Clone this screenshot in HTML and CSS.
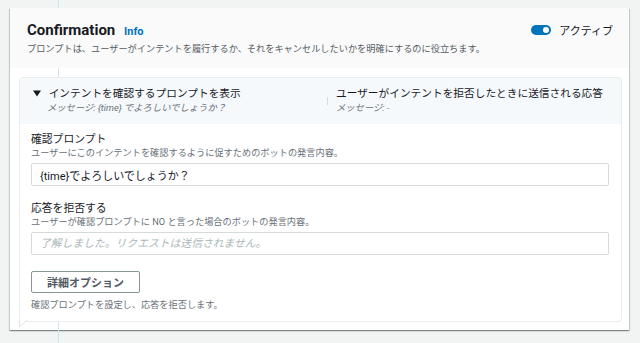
FILE: index.html
```html
<!DOCTYPE html>
<html lang="ja">
<head>
    <meta charset="UTF-8">
    <title>Confirmation</title>
    <link rel="stylesheet" href="styles.css">
</head>
<body>
<div class="page">
    <div class="flow-line"></div>

    <section class="card">
        <header class="card-head">
            <div class="head-text">
                <h2>Confirmation <a class="info">Info</a></h2>
                <p>プロンプトは、ユーザーがインテントを履行するか、それをキャンセルしたいかを明確にするのに役立ちます。</p>
            </div>
            <label class="toggle"><span class="switch"></span>アクティブ</label>
        </header>

        <div class="card-body">
            <div class="panel">
                <div class="panel-head">
                    <div class="col col-left">
                        <div class="col-title">
                            <svg class="caret" width="8" height="7" viewBox="0 0 8 7"><path d="M0 0.5h8L4 6.5z" fill="#16191f"/></svg>
                            インテントを確認するプロンプトを表示
                        </div>
                        <div class="col-sub">メッセージ: {time} でよろしいでしょうか？</div>
                    </div>
                    <div class="col col-right">
                        <div class="col-title">ユーザーがインテントを拒否したときに送信される応答</div>
                        <div class="col-sub">メッセージ: -</div>
                    </div>
                </div>

                <div class="panel-body">
                    <div class="field">
                        <div class="label">確認プロンプト</div>
                        <div class="desc">ユーザーにこのインテントを確認するように促すためのボットの発言内容。</div>
                        <input class="text-input" type="text" value="{time}でよろしいでしょうか？">
                    </div>

                    <div class="field">
                        <div class="label">応答を拒否する</div>
                        <div class="desc">ユーザーが確認プロンプトに NO と言った場合のボットの発言内容。</div>
                        <input class="text-input" type="text" placeholder="了解しました。リクエストは送信されません。">
                    </div>

                    <button class="btn">詳細オプション</button>
                    <div class="desc foot">確認プロンプトを設定し、応答を拒否します。</div>
                </div>

                <!-- 吹き出しのしっぽ -->
                <svg class="tail" width="9" height="8" viewBox="0 0 9 8"><path d="M0.5 0V7L8 0" fill="#fff" stroke="#e1e4e4"/></svg>
            </div>
        </div>
    </section>
</div>
</body>
</html>
```

FILE: styles.css
```css
*{
    margin: 0;
    padding: 0;
    box-sizing: border-box;
}
body{
    background: #f2f3f3;
    font-family: Roboto, "Noto Sans CJK JP", sans-serif;
    color: #16191f;
}
.page{
    position: relative;
    height: 343px;
    padding: 8px 11px 0 10px;
}
.flow-line{
    position: absolute;
    left: 58px;
    top: 0;
    bottom: 0;
    width: 1px;
    background: #cbe6ee;
    z-index: 1;
}

.card{
    height: 322px;
    background: #fff;
    box-shadow: 0 1px 1px 0 rgba(0, 28, 36, .3), 1px 1px 1px 0 rgba(0, 28, 36, .15), -1px 1px 1px 0 rgba(0, 28, 36, .15);
}
.card-head{
    position: relative;
    z-index: 2;
    height: 60px;
    padding: 12px 16px 0 17px;
    background: #fafafa;
    display: flex;
    justify-content: space-between;
    align-items: flex-start;
}
.card-head h2{
    font-size: 15px;
    line-height: 20px;
    font-weight: 700;
}
.info{
    margin-left: 5px;
    font-size: 11px;
    font-weight: 700;
    color: #0073bb;
}
.card-head p{
    font-size: 9.2px;
    line-height: 14px;
    color: #545b64;
}
.toggle{
    display: flex;
    align-items: center;
    height: 20px;
    font-size: 11px;
    color: #16191f;
}
.switch{
    position: relative;
    width: 20px;
    height: 10px;
    margin-right: 8px;
    border-radius: 5px;
    background: #0073bb;
}
.switch:after{
    content: "";
    position: absolute;
    right: 2px;
    top: 2px;
    width: 6px;
    height: 6px;
    border-radius: 50%;
    background: #fff;
}

.card-body{
    padding: 9px 7px 8px 9px;
}
.panel{
    position: relative;
    z-index: 2;
    height: 245px;
    border: 1px solid #eaeded;
    border-radius: 4px;
    background: #fff;
}
.panel-head{
    display: flex;
    height: 46px;
    padding: 8px 0 0 13px;
    background: #f6f9fc;
    border-radius: 4px 4px 0 0;
}
.col-left{
    width: 294px;
}
.col-right{
    position: relative;
    padding-left: 9px;
}
.col-right:before{
    content: "";
    position: absolute;
    left: 0;
    top: 11px;
    height: 8px;
    width: 1px;
    background: #d5dbdb;
}
.col-title{
    font-size: 10.7px;
    line-height: 15px;
    white-space: nowrap;
}
.caret{
    margin-right: 5px;
    vertical-align: 0;
}
.col-sub{
    padding-left: 14px;
    font-size: 9.3px;
    line-height: 14px;
    font-style: italic;
    color: #687078;
}
.col-right .col-sub{
    padding-left: 0;
}

.panel-body{
    padding: 9px 12px 0 11px;
}
.field + .field{
    margin-top: 16px;
}
.label{
    font-size: 10.8px;
    line-height: 14px;
}
.desc{
    font-size: 9.2px;
    line-height: 12px;
    color: #687078;
}
.text-input{
    display: block;
    width: 100%;
    height: 23px;
    margin-top: 4px;
    padding: 0 8px;
    border: 1px solid #d5dbdb;
    border-radius: 2px;
    font-family: Roboto, "Noto Sans CJK JP", sans-serif;
    font-size: 11px;
    color: #16191f;
    background: #fff;
}
.text-input::placeholder{
    font-style: italic;
    font-size: 10.8px;
    color: #aab7b8;
}
.btn{
    display: block;
    height: 22px;
    margin-top: 16px;
    padding: 0 15px;
    border: 1px solid #879596;
    border-radius: 2px;
    background: #fff;
    font-family: Roboto, "Noto Sans CJK JP", sans-serif;
    font-size: 11px;
    font-weight: 700;
    color: #545b64;
}
.foot{
    margin-top: 6px;
}
.tail{
    position: absolute;
    left: -1px;
    bottom: -7px;
}
```
